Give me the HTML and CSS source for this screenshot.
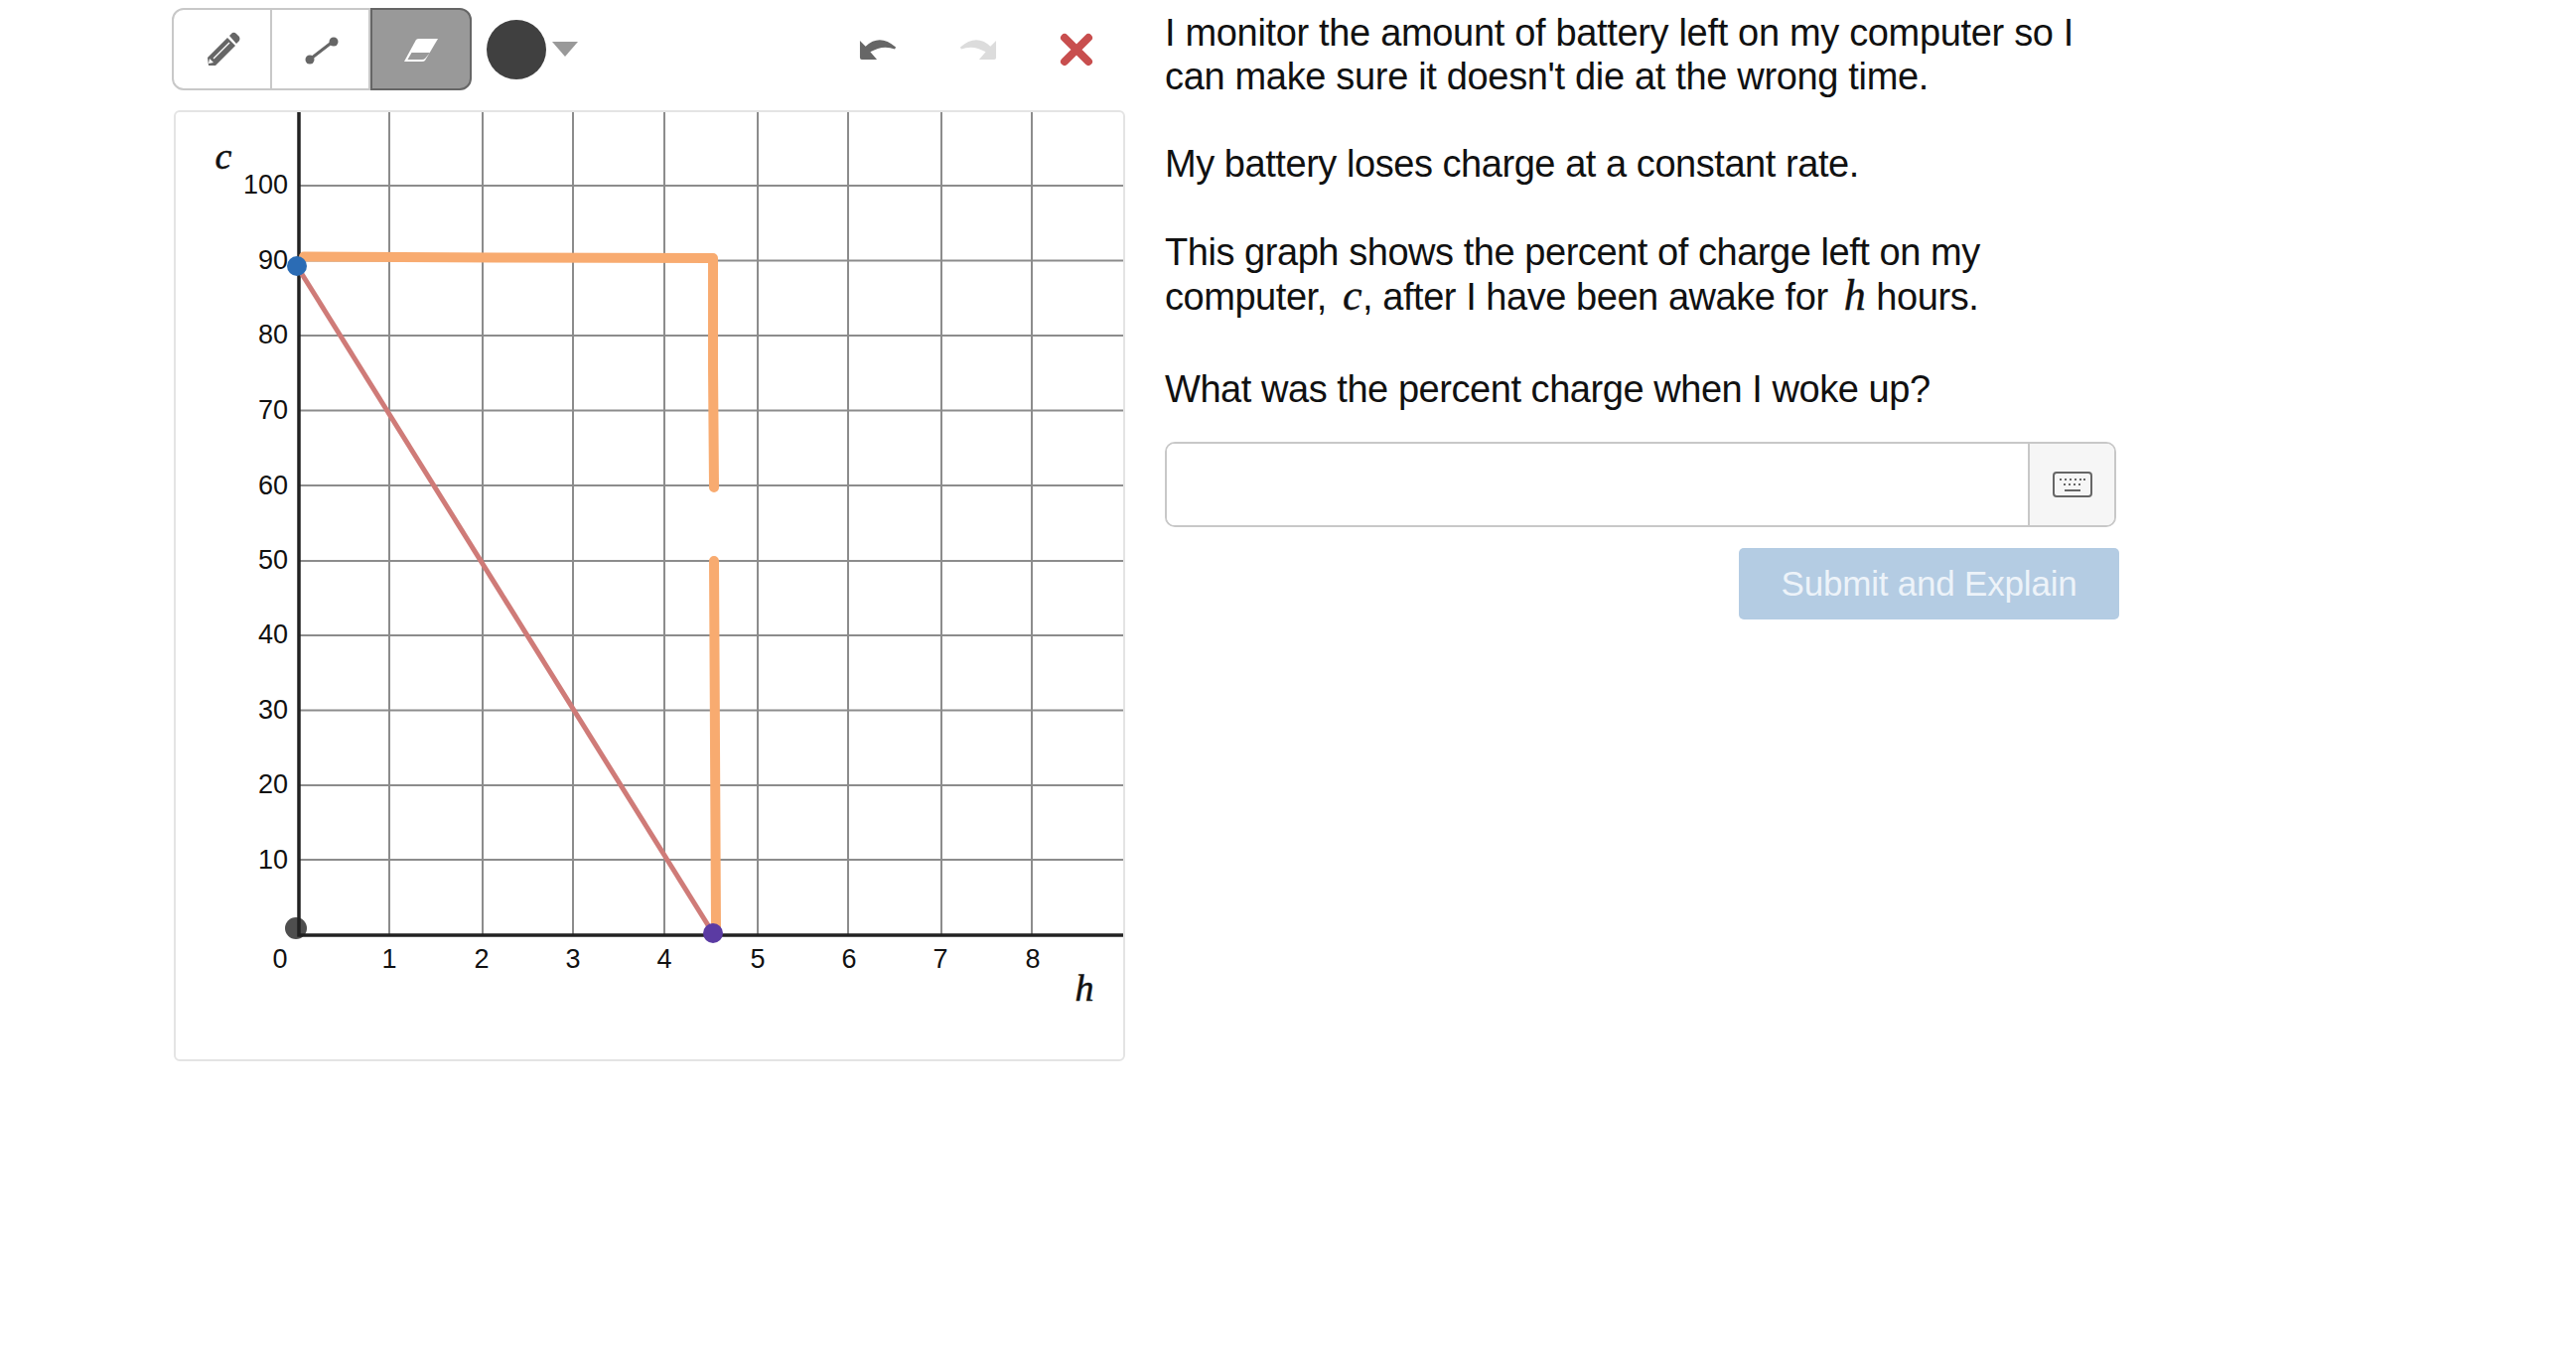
FILE: index.html
```html
<!DOCTYPE html>
<html lang="en">
<head>
  <meta charset="UTF-8">
  <meta name="viewport" content="width=device-width, initial-scale=1.0">
  <title>Battery Charge Graph</title>
  <link rel="stylesheet" href="styles.css">
</head>
<body>

  <div class="page">
    <div class="graph-column">
      <!-- Drawing tools -->
      <div class="toolbar">
        <div class="tool-group">
          <div class="tool-btn">
            <svg class="tool-icon" viewBox="0 0 40 40">
              <path class="icon-fill" d="M6 36 L5 28 L25 8 L33 16 L13 36 Z"/>
              <path class="icon-fill" d="M27 6 L30 3 Q32 2 34 4 L37 7 Q38 9 37 11 L34 14 Z"/>
              <path class="pencil-mark" d="M11 29 L27 13"/>
              <path class="pencil-tip" d="M6 34 L7 29 L11 33 Z"/>
            </svg>
          </div>
          <div class="tool-btn">
            <svg class="tool-icon" viewBox="0 0 40 40">
              <path class="icon-line" d="M10 29 L32 12"/>
              <circle class="icon-fill" cx="9" cy="30" r="4.5"/>
              <circle class="icon-fill" cx="33" cy="12" r="4.5"/>
            </svg>
          </div>
          <div class="tool-btn active">
            <svg class="tool-icon" viewBox="0 0 40 40">
              <path class="eraser-body" d="M3 32 L15 10 Q16 9 18 9 L37 9 L24 31 Q23 32 21 32 Z"/>
              <path class="eraser-window" d="M6.500 30 L10.500 23 L29 23 L24 29 Q23 30 21 30 Z"/>
            </svg>
          </div>
        </div>
        <div class="color-dot"></div>
        <div class="color-caret"></div>
        <div class="history">
          <svg class="history-icon" viewBox="0 0 40 24">
            <path class="undo" d="M1 3 L1 21 Q1 23 3 23 L19 23 L12 15 Q25 7 38 12 L39 10 Q22 -5 7 9 Z"/>
          </svg>
          <svg class="history-icon" viewBox="0 0 40 24">
            <path class="redo" d="M39 3 L39 21 Q39 23 37 23 L21 23 L28 15 Q15 7 2 12 L1 10 Q18 -5 33 9 Z"/>
          </svg>
          <svg class="close-icon" viewBox="0 0 34 34">
            <path class="close-x" d="M5 5 L29 29 M29 5 L5 29"/>
          </svg>
        </div>
      </div>

      <!-- Graph, coordinates are page pixels -->
      <div class="graph-card">
        <svg class="graph" viewBox="177 113 954 954">
          <g class="grid">
            <path d="M392 113V942 M486 113V942 M577 113V942 M669 113V942 M763 113V942 M854 113V942 M948 113V942 M1039 113V942"/>
            <path d="M301 187H1131 M301 262.500H1131 M301 338H1131 M301 413.500H1131 M301 489H1131 M301 565H1131 M301 640H1131 M301 715.500H1131 M301 791H1131 M301 866H1131"/>
          </g>
          <path class="axis" d="M301 113V942H1131"/>

          <g class="y-labels">
            <text x="290" y="186">100</text>
            <text x="290" y="262">90</text>
            <text x="290" y="337">80</text>
            <text x="290" y="413">70</text>
            <text x="290" y="489">60</text>
            <text x="290" y="564">50</text>
            <text x="290" y="639">40</text>
            <text x="290" y="715">30</text>
            <text x="290" y="790">20</text>
            <text x="290" y="866">10</text>
          </g>
          <g class="x-labels">
            <text x="282" y="966">0</text>
            <text x="392" y="966">1</text>
            <text x="485" y="966">2</text>
            <text x="577" y="966">3</text>
            <text x="669" y="966">4</text>
            <text x="763" y="966">5</text>
            <text x="855" y="966">6</text>
            <text x="947" y="966">7</text>
            <text x="1040" y="966">8</text>
          </g>
          <text class="axis-name" x="225" y="170">c</text>
          <text class="axis-name" x="1092" y="1008">h</text>

          <path class="line-red" d="M299 268 L718 940"/>
          <path class="stroke-orange" d="M306 258.500 L500 259.500 L718 260 L718 370 L719 491"/>
          <path class="stroke-orange" d="M719 565 L720 750 L721 935"/>

          <circle class="pt-blue" cx="299" cy="268" r="10"/>
          <circle class="pt-black" cx="298" cy="935" r="11"/>
          <circle class="pt-purple" cx="718" cy="940" r="10"/>
        </svg>
      </div>
    </div>

    <div class="question">
      <p>I monitor the amount of battery left on my computer so I can make sure it doesn't die at the wrong time.</p>
      <p>My battery loses charge at a constant rate.</p>
      <p>This graph shows the percent of charge left on my computer, <span class="math">c</span>, after I have been awake for <span class="math">h</span> hours.</p>
      <p>What was the percent charge when I woke up?</p>

      <div class="answer-box">
        <div class="answer-input"></div>
        <div class="answer-addon">
          <svg class="keyboard" viewBox="0 0 40 26">
            <rect class="keyboard-case" x="1" y="1" width="38" height="24" rx="3"/>
            <path class="keyboard-keys" d="M7 8H9 M12 8H14 M17 8H19 M22 8H24 M27 8H29 M31 8H33 M11 13H13 M16 13H18 M21 13H23 M26 13H28 M12 19H28"/>
          </svg>
        </div>
      </div>
      <div class="submit-row">
        <button class="submit-btn">Submit and Explain</button>
      </div>
    </div>
  </div>

</body>
</html>
```

FILE: styles.css
```css
/* Basic Styles */
body {
  margin: 0;
  background-color: #ffffff;
  font-family: "Liberation Sans", Arial, sans-serif;
  color: #111;
}

.page {
  display: flex;
  align-items: flex-start;
  padding: 8px 0 0 173px;
}

.graph-column {
  width: 960px;
}

/* Toolbar */
.toolbar {
  display: flex;
  align-items: center;
  height: 83px;
  margin-bottom: 20px;
}

.tool-group {
  display: grid;
  grid-template-columns: 101px 99px 102px;
  height: 83px;
}

.tool-btn {
  display: flex;
  align-items: center;
  justify-content: center;
  box-sizing: border-box;
  border: 2px solid #c8c8c8;
  border-left: none;
}

.tool-btn:first-child {
  border-left: 2px solid #c8c8c8;
  border-radius: 12px 0 0 12px;
}

.tool-btn.active {
  background-color: #999;
  border: 2px solid #666;
  border-radius: 0 12px 12px 0;
}

.tool-icon {
  width: 40px;
  height: 40px;
}

.icon-fill {
  fill: #666;
}

.icon-line {
  stroke: #666;
  stroke-width: 3;
  fill: none;
}

.pencil-mark {
  stroke: #fff;
  stroke-width: 1.2;
  fill: none;
}

.pencil-tip {
  fill: #fff;
}

.eraser-body {
  fill: #fff;
}

.eraser-window {
  fill: #999;
}

.color-dot {
  width: 60px;
  height: 60px;
  margin-left: 15px;
  border-radius: 50%;
  background-color: #404040;
}

.color-caret {
  width: 0;
  height: 0;
  margin-left: 6px;
  border-left: 13px solid transparent;
  border-right: 13px solid transparent;
  border-top: 15px solid #999;
}

.history {
  display: flex;
  align-items: center;
  margin-left: 283px;
  gap: 63px;
}

.history-icon {
  width: 38px;
  height: 23px;
}

.undo {
  fill: #666;
}

.redo {
  fill: #dcdcdc;
}

.close-icon {
  width: 34px;
  height: 34px;
}

.close-x {
  stroke: #c84e4e;
  stroke-width: 8;
  stroke-linecap: round;
  fill: none;
}

/* Graph */
.graph-card {
  width: 958px;
  height: 958px;
  margin-left: 2px;
  box-sizing: border-box;
  border: 2px solid #e4e4e4;
  border-radius: 6px;
}

.graph {
  display: block;
  width: 954px;
  height: 954px;
}

.grid path {
  stroke: #8c8c8c;
  stroke-width: 2;
  fill: none;
}

.axis {
  stroke: #222;
  stroke-width: 3.500;
  fill: none;
}

.y-labels text,
.x-labels text {
  font-family: "Liberation Sans", Arial, sans-serif;
  font-size: 27px;
  dominant-baseline: central;
  fill: #111;
}

.y-labels text {
  text-anchor: end;
}

.x-labels text {
  text-anchor: middle;
}

.axis-name {
  font-family: "Liberation Serif", "Times New Roman", serif;
  font-style: italic;
  font-size: 38px;
  text-anchor: middle;
  stroke: #111;
  stroke-width: 0.500;
  fill: #111;
}

.line-red {
  stroke: #cf7b78;
  stroke-width: 5;
  fill: none;
}

.stroke-orange {
  stroke: #f8ab70;
  stroke-width: 10;
  stroke-linecap: round;
  stroke-linejoin: round;
  fill: none;
}

.pt-blue {
  fill: #2b6cb5;
}

.pt-black {
  fill: #222;
  fill-opacity: 0.8;
}

.pt-purple {
  fill: #5b3ba3;
}

/* Question */
.question {
  width: 960px;
  margin-left: 40px;
  margin-top: 3px;
  font-size: 38px;
  letter-spacing: -0.45px;
  line-height: 44px;
}

.question p {
  width: 930px;
  margin: 0 0 44px;
}

.question p:first-child {
  letter-spacing: -0.33px;
}

.question p:nth-of-type(3) {
  margin-top: 45px;
  margin-bottom: 49px;
}

.question p:nth-of-type(4) {
  margin-bottom: 31px;
}

.math {
  font-family: "Liberation Serif", "Times New Roman", serif;
  font-style: italic;
  font-size: 44px;
  line-height: 1;
  margin: 0 1px 0 6px;
  -webkit-text-stroke: 0.4px #111;
}

.answer-box {
  display: flex;
  width: 958px;
  height: 86px;
  box-sizing: border-box;
  border: 2px solid #c8c8c8;
  border-radius: 10px;
  overflow: hidden;
}

.answer-input {
  flex: 1;
  background-color: #fff;
}

.answer-addon {
  display: flex;
  width: 85px;
  align-items: center;
  justify-content: center;
  background-color: #f6f6f6;
  border-left: 2px solid #c8c8c8;
}

.keyboard {
  width: 40px;
  height: 26px;
}

.keyboard-case {
  fill: none;
  stroke: #666;
  stroke-width: 2;
}

.keyboard-keys {
  fill: none;
  stroke: #666;
  stroke-width: 2;
}

.submit-row {
  display: flex;
  justify-content: flex-end;
  width: 961px;
  margin-top: 21px;
}

.submit-btn {
  width: 383px;
  height: 72px;
  padding: 0;
  border: none;
  border-radius: 5px;
  background-color: #b4cce3;
  color: #edf3f9;
  font-family: "Liberation Sans", Arial, sans-serif;
  font-size: 35px;
  letter-spacing: -0.2px;
}
```
